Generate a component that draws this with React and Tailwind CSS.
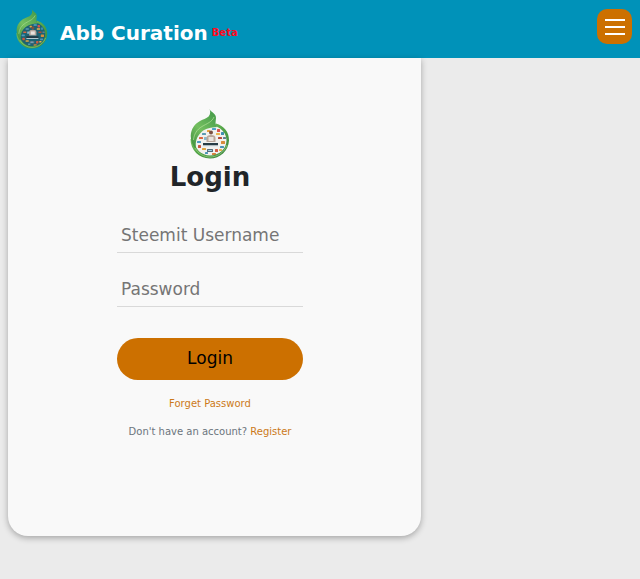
import React, { useState } from "react";

const tiles = [
    [17, 21, 3, 2, "#e8a13a"], [22, 19, 4, 2, "#4fa3c7"], [27, 20, 3, 3, "#d9534f"],
    [12, 24, 4, 2, "#5b9bb5"], [26, 24, 4, 2, "#e9b44c"], [31, 23, 3, 3, "#3f8fae"],
    [9, 28, 4, 2, "#d9673f"], [14, 28, 3, 3, "#8bb9cc"], [28, 28, 4, 2, "#b24a3a"],
    [33, 28, 3, 2, "#5f7f8f"], [7, 32, 4, 2, "#4d9ac0"], [31, 32, 4, 3, "#d88b3c"],
    [8, 36, 3, 3, "#c9553f"], [30, 37, 4, 2, "#4a93b5"], [12, 39, 4, 2, "#e2a53f"],
    [17, 40, 6, 3, "#566b78"], [18, 41, 4, 1, "#9fd0e6"], [25, 40, 3, 3, "#cf5a42"],
    [29, 40, 3, 2, "#e6b04b"], [15, 43, 3, 2, "#4b96b8"], [22, 44, 4, 2, "#d7803b"],
];

const Logo = ({ id, inner, className }) => (
    <svg viewBox="0 0 40 50" className={className} aria-hidden="true">
        <defs>
            <linearGradient id={`${id}-leaf`} x1="0" y1="1" x2="0.7" y2="0">
                <stop offset="0" stopColor="#3a8a3c" />
                <stop offset="0.5" stopColor="#74bf60" />
                <stop offset="1" stopColor="#4a9f4c" />
            </linearGradient>
            <linearGradient id={`${id}-ring`} x1="0" y1="0" x2="1" y2="1">
                <stop offset="0" stopColor="#8ccf6c" />
                <stop offset="0.6" stopColor="#4a9d43" />
                <stop offset="1" stopColor="#3c7f45" />
            </linearGradient>
        </defs>
        <circle cx="20" cy="31" r="17" fill={inner} />
        {tiles.map(([x, y, w, h, color]) => (
            <rect key={`${x}-${y}`} x={x} y={y} width={w} height={h} rx="0.5" fill={color} />
        ))}
        <circle cx="21" cy="23.500" r="2" fill="#7a5144" />
        <path d="M16.500 33v-4q0-3 4.500-3t4.500 3v4z" fill="#b9a79b" />
        <path d="M18.500 28h5v4h-5z" fill="#e9e4df" />
        <rect x="13" y="34" width="15" height="2.500" fill="#263b45" />
        <rect x="13" y="36.500" width="15" height="1" fill="#d8e4e8" />
        <path
            d="M26 14.500C34 17 39.300 23 39 31.500C38.500 42 30 49.500 20 49.500C9 49.500 0.500 41 0.500 30L4 31C4.500 40 11.500 46.500 20 46.500C29 46.500 36.500 40 36.500 31.500C36.500 25 32.500 20 25.500 17z"
            fill={`url(#${id}-ring)`}
        />
        <path
            d="M19.500 0C21 3.500 26 4 26 9C26 12 24.500 14 27 18C21 18.500 16 19 12 22.500C7 27 5 32 6 40C1.500 35.500 -0.500 28 1.500 22C3.500 15.500 9 12 14.500 10C19 8.500 21.500 5 19.500 0z"
            fill={`url(#${id}-leaf)`}
        />
        <path
            d="M24 8C22 13 17 14.500 12 17.500C7 20.500 4 25 3.500 31"
            fill="none"
            stroke="#b4e298"
            strokeWidth="1"
            opacity="0.7"
        />
        <path d="M5 39C8 44.500 14 48 20 48C27 48 34.500 43.500 37 36" fill="none" stroke="#9fd485" strokeWidth="0.700" />
    </svg>
);

const Header = () => (
    <header className="flex h-[58px] items-start justify-between bg-[#0092b9] pt-[9px] pr-2 pl-4">
        <a href="/" className="flex items-center gap-3 text-white">
            <Logo id="nav" inner="#1d6272" className="h-10 w-8" />
            <span className="flex items-center gap-1 pt-2">
                <span className="text-xl leading-6 font-bold">Abb Curation</span>
                <span className="text-[10px] leading-6 font-bold text-[#ff0a1e]">Beta</span>
            </span>
        </a>
        <button
            type="button"
            aria-label="Menu"
            className="flex h-[35px] w-[35px] flex-col items-center justify-center gap-[5px] rounded-[10px] bg-[#cc7000]"
        >
            <span className="h-0.5 w-5 bg-white" />
            <span className="h-0.5 w-5 bg-white" />
            <span className="h-0.5 w-5 bg-white" />
        </button>
    </header>
);

const inputClass =
    "h-9 w-full border-b border-[#d9d9d9] bg-transparent px-1 text-[17px] text-[#222] placeholder:text-[#757575] focus:outline-none";

const LoginForm = () => {
    const [username, setUsername] = useState("");
    const [password, setPassword] = useState("");

    const handleSubmit = (e) => {
        e.preventDefault();
    };

    return (
        <div className="w-full max-w-[413px] rounded-b-[20px] bg-[#f9f9f9] pt-[51px] pr-[29px] pb-24 pl-5 shadow-[0_2px_6px_rgba(0,0,0,0.3)]">
            <form onSubmit={handleSubmit} className="mx-auto flex max-w-[186px] flex-col items-center">
                <Logo id="card" inner="#f1f1ee" className="h-[50px] w-10" />
                <h1 className="text-[26px] leading-9 font-bold text-[#212529]">Login</h1>
                <input
                    type="text"
                    aria-label="Steemit Username"
                    placeholder="Steemit Username"
                    value={username}
                    onChange={(e) => setUsername(e.target.value)}
                    className={`${inputClass} mt-[22px]`}
                />
                <input
                    type="password"
                    aria-label="Password"
                    placeholder="Password"
                    value={password}
                    onChange={(e) => setPassword(e.target.value)}
                    className={`${inputClass} mt-[18px]`}
                />
                <button
                    type="submit"
                    className="mt-[31px] h-[42px] w-full rounded-full bg-[#cc7000] text-[17px] text-black"
                >
                    Login
                </button>
                <a href="/forget-password" className="mt-4 text-[10px] leading-4 text-[#cc7a1a]">
                    Forget Password
                </a>
                <p className="mt-3 text-[10px] leading-4 whitespace-nowrap text-[#6c757d]">
                    Don't have an account?{" "}
                    <a href="/register" className="text-[#cc7a1a]">
                        Register
                    </a>
                </p>
            </form>
        </div>
    );
};

const App = () => {
    return (
        <div className="min-h-screen bg-[#ebebeb] font-['DejaVu_Sans',sans-serif]">
            <Header />
            <main className="px-2 pb-11">
                <LoginForm />
            </main>
        </div>
    );
};

export default App;
